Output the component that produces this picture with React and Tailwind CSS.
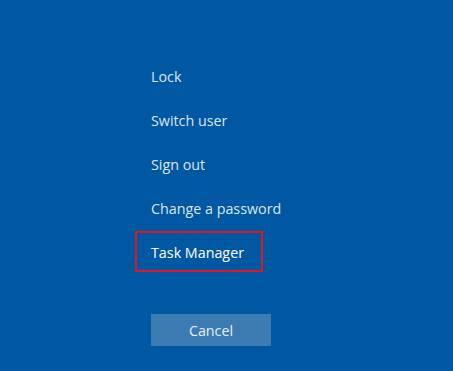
const items = ['Lock', 'Switch user', 'Sign out', 'Change a password']

export default function App() {
	return (
		<div className="h-[371px] w-[453px] overflow-hidden bg-[#0058a2] pl-[151px] pt-[55px] font-['Open_Sans','Noto_Sans',sans-serif] text-[14.3px]">
			{items.map(item => (
				<div key={item} className="flex h-11 items-center text-[#dbe6f1]">{item}</div>
			))}
			<div className="flex h-11 items-center">
				<div className="-ml-[16px] -mt-[4px] flex h-[41px] w-[128px] items-center border-2 border-[#e8141f] pl-[14px] pt-[4px] text-white">Task Manager</div>
			</div>
			<button className="mt-[39px] flex h-[32px] w-[120px] items-center justify-center bg-[#3b7bb2] pt-[1px] text-[#e6eef6]">Cancel</button>
		</div>
	)
}
